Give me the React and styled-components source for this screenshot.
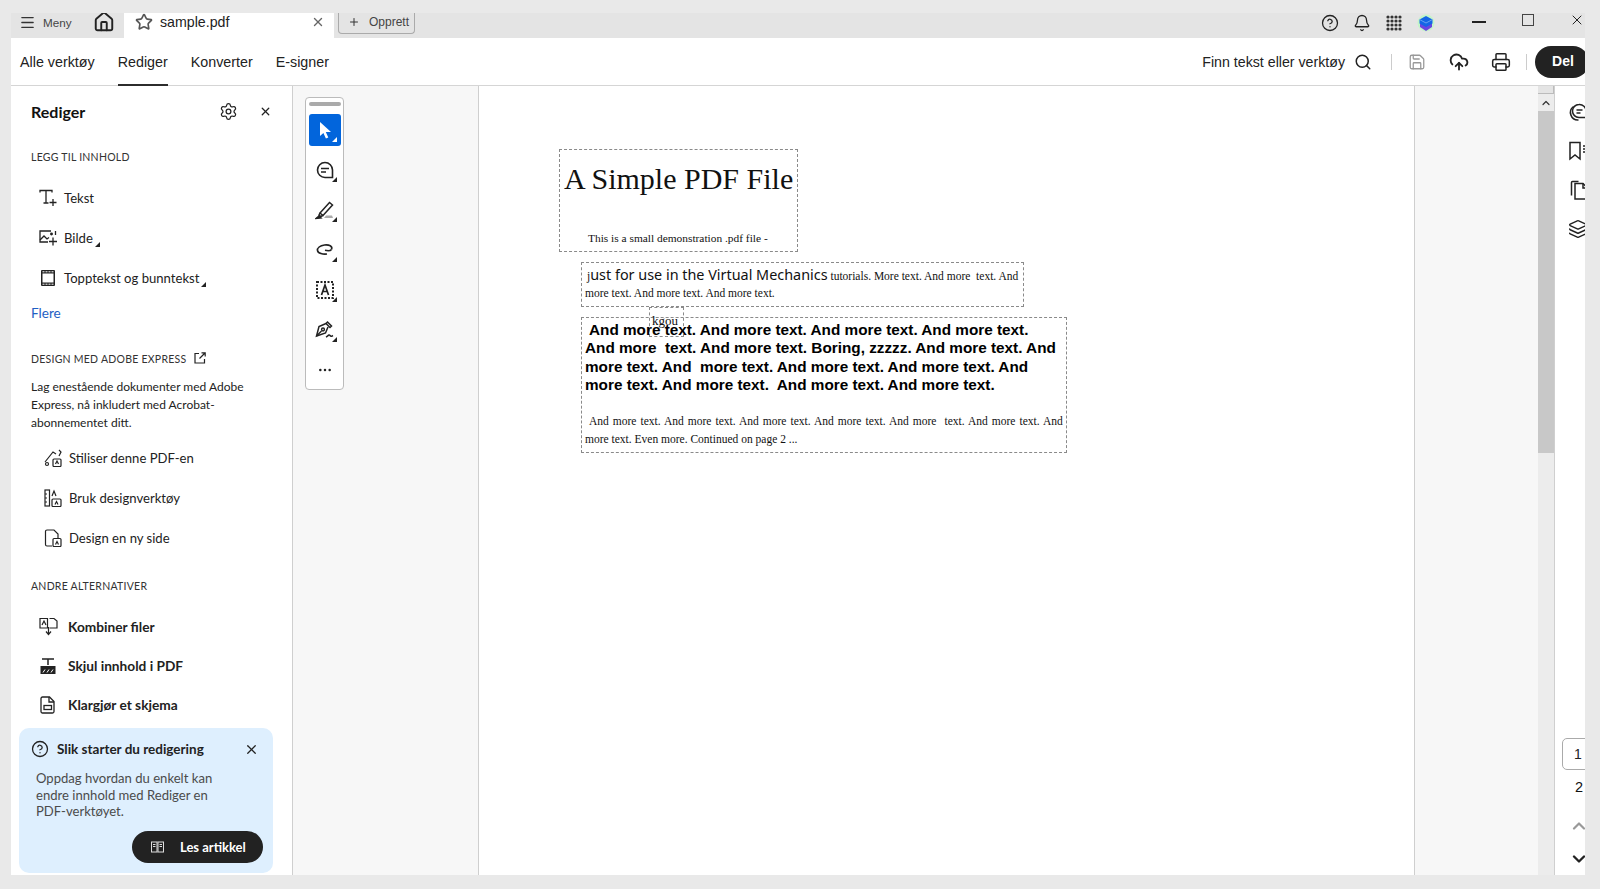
import React from 'react'
import styled, { createGlobalStyle } from 'styled-components'
import {
  Menu, Home, Star, X, Plus, CircleHelp, Bell, Search, Save, CloudUpload, Printer,
  Settings, ChevronUp, ChevronDown, Layers, Ellipsis,
} from 'lucide-react'

const GlobalStyle = createGlobalStyle`
  html, body { margin: 0; padding: 0; background: #e9e9e9; }
  #root { height: 889px; overflow: hidden; }
  * { box-sizing: border-box; }
`

const Shell = styled.div`
  height: 889px;
  padding: 13px 15px 14px 11px;
  color: #222;
  font-family: "Liberation Sans", Arial, sans-serif;
`

const Frame = styled.div`
  height: 100%;
  display: flex;
  flex-direction: column;
  background: #fff;
  overflow: hidden;
`

const TitleBar = styled.div`
  height: 25px;
  flex: none;
  display: flex;
  align-items: flex-start;
  background: #e4e4e4;
`

const MenuButton = styled.div`
  width: 113px;
  height: 25px;
  display: flex;
  align-items: center;
  padding: 0 0 7px 8px;
  font-size: 11.7px;
  color: #444;
  svg { flex: none; }
  span { margin-left: 7px; margin-right: 21px; }
`

const Tab = styled.div`
  width: 210px;
  height: 25px;
  display: flex;
  align-items: center;
  padding: 0 0 7px 11px;
  background: #fff;
  font-size: 14.2px;
  span { margin-left: 7px; flex: 1; }
  svg:last-child { margin-right: 9px; }
`

const CreateButton = styled.div`
  width: 77px;
  height: 21px;
  margin-left: 4px;
  display: flex;
  align-items: center;
  gap: 9px;
  padding: 0 0 2px 9px;
  border: 1px solid #aaa;
  border-top: 0;
  border-radius: 0 0 4px 4px;
  font-size: 12px;
  color: #444;
`

const TitleRight = styled.div`
  margin-left: auto;
  display: flex;
  align-items: center;
  height: 18px;
  margin-top: 1px;
`

const IconSlot = styled.span`
  display: flex;
  margin-left: ${p => p.$left || 0}px;
  margin-right: ${p => p.$gap || 0}px;
  margin-top: ${p => p.$top || 0}px;
`

const WinControl = styled.span`
  display: block;
  flex: none;
  &[data-kind='min'] { width: 14px; height: 2px; background: #222; margin-right: 36px; margin-top: -2px; }
  &[data-kind='max'] { width: 12px; height: 12px; border: 1.5px solid #444; margin-right: 35px; margin-top: -6px; }
`

const MenuBar = styled.div`
  height: 48px;
  flex: none;
  display: flex;
  align-items: stretch;
  padding-left: 9px;
  border-bottom: 1px solid #d5d5d5;
`

const MenuItem = styled.div`
  display: flex;
  align-items: center;
  margin-right: 23px;
  height: 48px;
  padding-top: 2px;
  font-size: 14.3px;
  color: #222;
  border-bottom: 2px solid ${p => (p.$active ? '#2c2c2c' : 'transparent')};
`

const MenuRight = styled.div`
  margin-left: auto;
  display: flex;
  align-items: center;
`

const FindLabel = styled.span`
  font-size: 14.2px;
  margin-right: 9px;
`

const Divider = styled.span`
  width: 1px;
  height: 16px;
  background: #ccc;
  margin: 0 ${p => p.$right}px 0 ${p => p.$left}px;
`

const ShareButton = styled.div`
  width: 54px;
  height: 32px;
  flex: none;
  margin-right: -4px;
  padding-left: 2px;
  padding-bottom: 1px;
  display: flex;
  align-items: center;
  justify-content: center;
  background: #222;
  color: #fff;
  border-radius: 16px;
  font-size: 14px;
  font-weight: 700;
`

const Body = styled.div`
  flex: 1;
  min-height: 0;
  display: flex;
`

const Sidebar = styled.aside`
  width: 282px;
  flex: none;
  display: flex;
  flex-direction: column;
  border-right: 1px solid #cfcfcf;
  padding-left: 20px;
  font-family: Lato, "Noto Sans", sans-serif;
  font-size: 13.1px;
  color: #222;
`

const SideHead = styled.div`
  height: 54px;
  flex: none;
  display: flex;
  align-items: center;
  padding-bottom: 3px;
  h2 { margin: 0; font-size: 16px; font-weight: 700; flex: 1; color: #111; }
  svg:first-of-type { margin-right: 21px; }
  svg:last-of-type { margin-right: 20px; }
`

const SectionLabel = styled.div`
  height: 14px;
  flex: none;
  display: flex;
  align-items: center;
  gap: 8px;
  margin-top: ${p => p.$top || 0}px;
  font-size: 10.5px;
  letter-spacing: 0.25px;
  color: #333;
  text-transform: uppercase;
  white-space: nowrap;
  svg { margin-top: -3px; }
`

const Rows = styled.div`
  flex: none;
  margin-top: ${p => p.$top}px;
`

const ToolRow = styled.div`
  height: ${p => p.$h || 40}px;
  display: flex;
  align-items: center;
  margin-left: ${p => p.$indent || 8}px;
  font-weight: ${p => (p.$bold ? 700 : 400)};
  font-size: ${p => (p.$bold ? 13.7 : 13.1)}px;
  white-space: nowrap;
  svg { flex: none; margin-right: ${p => p.$gap || 7}px; }
`

const MoreLink = styled.div`
  height: 18px;
  margin-top: 6px;
  flex: none;
  display: flex;
  align-items: center;
  color: #1f5fc4;
  font-size: 13.6px;
`

const Blurb = styled.p`
  margin: 12px 0 0;
  flex: none;
  font-size: 12px;
  line-height: 18px;
  color: #222;
  white-space: nowrap;
`

const MiniCaret = styled.span`
  display: inline-block;
  width: 0;
  height: 0;
  margin: 12px 0 0 2px;
  border-style: solid;
  border-width: 0 0 5px 5px;
  border-color: transparent transparent #222 transparent;
`

const Callout = styled.section`
  width: 254px;
  height: 145px;
  flex: none;
  margin: auto 0 2px -12px;
  padding: 12px 10px 10px 12px;
  display: flex;
  flex-direction: column;
  background: #deeffe;
  border-radius: 10px;
`

const CalloutHead = styled.div`
  height: 18px;
  flex: none;
  display: flex;
  align-items: center;
  gap: 8px;
  font-weight: 700;
  font-size: 13.5px;
  span { flex: 1; }
  svg:last-child { margin-right: 4px; }
`

const CalloutText = styled.p`
  margin: 12px 0 0 5px;
  font-size: 13.1px;
  line-height: 16.5px;
  color: #4b4b4b;
  white-space: nowrap;
`

const ReadButton = styled.div`
  width: 131px;
  height: 32px;
  margin-top: auto;
  align-self: flex-end;
  display: flex;
  align-items: center;
  padding-left: 19px;
  gap: 16px;
  background: #222;
  color: #fff;
  border-radius: 16px;
  font-size: 13px;
  font-weight: 700;
`

const Gutter = styled.div`
  width: 186px;
  flex: none;
  padding: 11px 0 0 12px;
  background: #f7f7f7;
  border-right: 1px solid #cfcfcf;
`

const ToolStrip = styled.div`
  width: 39px;
  height: 293px;
  display: flex;
  flex-direction: column;
  align-items: center;
  background: #fff;
  border: 1px solid #bbb;
  border-radius: 4px;
  padding-top: 4px;
`

const StripHandle = styled.div`
  width: 32px;
  height: 4px;
  flex: none;
  background: #aaa;
  border-radius: 2px;
  margin-bottom: 8px;
`

const StripButton = styled.div`
  position: relative;
  width: 32px;
  height: ${p => p.$h || 32}px;
  flex: none;
  margin-bottom: ${p => p.$mb ?? 8}px;
  display: flex;
  align-items: center;
  justify-content: center;
  border-radius: 3px;
  background: ${p => (p.$active ? '#0265dc' : 'transparent')};
  color: ${p => (p.$active ? '#fff' : '#222')};
  &::after {
    content: ${p => (p.$plain ? 'none' : "''")};
    position: absolute;
    right: 4px;
    bottom: 4px;
    border-style: solid;
    border-width: 0 0 5px 5px;
    border-color: transparent transparent ${p => (p.$active ? '#fff' : '#222')} transparent;
  }
`

const Page = styled.main`
  position: relative;
  width: 936px;
  flex: none;
  background: #fff;
  border-right: 1px solid #cfcfcf;
  font-family: "Liberation Serif", "Times New Roman", serif;
`

const TextBox = styled.div`
  position: absolute;
  left: ${p => p.$x}px;
  top: ${p => p.$y}px;
  width: ${p => p.$w}px;
  height: ${p => p.$h}px;
  border: 1px dashed #8a8a8a;
`

const PdfLine = styled.div`
  position: absolute;
  left: ${p => p.$x}px;
  top: ${p => p.$y}px;
  white-space: pre;
  font-size: ${p => p.$size}px;
  line-height: ${p => p.$size + 4}px;
  word-spacing: ${p => p.$ws || 0}px;
  color: #111;
`

const SansBold = styled(PdfLine)`
  font-family: "Liberation Sans", Arial, sans-serif;
  font-weight: 700;
  color: #000;
`

const SansRun = styled.span`
  font-family: "Noto Sans", "Open Sans", sans-serif;
  font-size: 14.4px;
`

const SideSpace = styled.div`
  width: 123px;
  flex: none;
  background: #f7f7f7;
`

const ScrollBar = styled.div`
  width: 16px;
  flex: none;
  display: flex;
  flex-direction: column;
  background: #ececec;
`

const ScrollCap = styled.div`
  height: 8px;
  border: 1px solid #bbb;
  border-top: 0;
  border-left: 0;
  background: #e4e4e4;
`

const ScrollArrow = styled.div`
  height: 17px;
  display: flex;
  align-items: center;
  justify-content: center;
`

const ScrollThumb = styled.div`
  height: 342px;
  background: #c8c8c8;
`

const Rail = styled.div`
  flex: 1;
  min-width: 0;
  overflow: hidden;
  display: flex;
  flex-direction: column;
  border-left: 1px solid #cfcfcf;
  padding-top: 15px;
`

const RailIcon = styled.div`
  width: 22px;
  height: 22px;
  flex: none;
  margin: 0 0 17px 12px;
  display: flex;
  align-items: center;
  justify-content: center;
  svg { flex: none; }
`

const PageBox = styled.div`
  width: 30px;
  height: 32px;
  flex: none;
  margin: auto 0 0 7px;
  padding-left: 11px;
  padding-bottom: 1px;
  display: flex;
  align-items: center;
  border: 1px solid #aaa;
  border-radius: 5px;
  font-size: 14px;
  color: #222;
`

const PageNum = styled.div`
  height: 39px;
  flex: none;
  padding: 0 0 5px 20px;
  display: flex;
  align-items: center;
  font-size: 14.5px;
  color: #111;
`

const PageArrow = styled.div`
  height: 33px;
  flex: none;
  padding-left: 14px;
  display: flex;
  align-items: center;
  svg { flex: none; }
`

const GridIcon = () => (
  <svg width="16" height="16" viewBox="0 0 16 16" fill="#333">
    {[2, 6, 10, 14].map(y => [2, 6, 10, 14].map(x => <circle key={`${x}-${y}`} cx={x} cy={y} r="1.6" />))}
  </svg>
)

const CubeLogo = () => (
  <svg width="18" height="18" viewBox="0 0 18 18">
    <circle cx="9" cy="9" r="8.5" fill="#c5f5c8" />
    <path d="M3 8l6 3.5 6-3.5v5l-6 4-6-4z" fill="#6a45e0" />
    <path d="M2.5 5.5L9 2l6.500 3.500v4L9 13 2.500 9.500z" fill="#1466e6" />
    <path d="M2.500 5.500L9 9l6.500-3.500" stroke="#8db8f5" strokeWidth=".7" fill="none" />
  </svg>
)

const TextPlus = () => (
  <svg width="18" height="18" viewBox="0 0 18 18" fill="none" stroke="#222" strokeWidth="1.300">
    <path d="M1 3.500V1.500h12v2M7 1.500V14M4.500 14h5" />
    <path d="M14 10v7M10.500 13.500h7" />
  </svg>
)

const ImagePlus = () => (
  <svg width="18" height="18" viewBox="0 0 18 18" fill="none" stroke="#222" strokeWidth="1.300">
    <path d="M12 2H1v11h8" />
    <path d="M1 11l4-4 3 3 2-1.500" />
    <circle cx="12.500" cy="5" r=".8" fill="#222" />
    <path d="M14 8.500v8M10 12.500h8M16.500 2v4" />
  </svg>
)

const FilmPage = () => (
  <svg width="18" height="18" viewBox="0 0 18 18">
    <rect x="2" y="1" width="14" height="16" rx="1" fill="#222" />
    <rect x="3.500" y="4.500" width="11" height="9" fill="#fff" />
    <path d="M3.500 2.800h11M3.500 15.200h11" stroke="#fff" strokeWidth="1" strokeDasharray="2 1" />
  </svg>
)

const ExternalBox = () => (
  <svg width="12" height="12" viewBox="0 0 12 12" fill="none" stroke="#222" strokeWidth="1.200">
    <path d="M5 1.500H1v9.500h9.500V7" />
    <path d="M5.500 6.500L11 1M7.500 .8H11.200V4.500" />
  </svg>
)

const StyleBrush = () => (
  <svg width="18" height="18" viewBox="0 0 18 18" fill="none" stroke="#222" strokeWidth="1.200">
    <path d="M1 13l8-10 3 2M15 1l2 2-2 4" />
    <circle cx="3" cy="15" r="1.500" />
    <rect x="9" y="10" width="8" height="7.500" rx="1" />
    <path d="M11.500 15l1.500-3 1.500 3" />
  </svg>
)

const RulerBox = () => (
  <svg width="18" height="18" viewBox="0 0 18 18" fill="none" stroke="#222" strokeWidth="1.200">
    <rect x="1" y="1" width="4.500" height="16" />
    <path d="M1 5h2M1 9h2M1 13h2M8 7l2-5 2 5" />
    <rect x="8" y="10" width="9" height="7.500" rx="1" />
    <path d="M11 15.500l1.500-3 1.500 3" />
  </svg>
)

const PageBox2 = () => (
  <svg width="18" height="18" viewBox="0 0 18 18" fill="none" stroke="#222" strokeWidth="1.200">
    <path d="M8 17H3a1.500 1.500 0 0 1-1.500-1.500v-13A1.500 1.500 0 0 1 3 1h7l4 4v4" />
    <rect x="9" y="9.500" width="8" height="8" rx="1" />
    <path d="M11.500 15.500l1.500-3 1.500 3" />
  </svg>
)

const CombineIcon = () => (
  <svg width="19" height="19" viewBox="0 0 19 19" fill="none" stroke="#222" strokeWidth="1.200">
    <path d="M9 11H1V1.500h7.500V11M10.500 11H18V4l-3-2.500h-4.500" />
    <path d="M3 8l2-4 2 4" />
    <path d="M9.500 10v7M7 14.500l2.500 3 2.500-3" />
  </svg>
)

const RedactIcon = () => (
  <svg width="18" height="18" viewBox="0 0 18 18">
    <path d="M3 2h12M9 2v6" stroke="#222" strokeWidth="1.500" fill="none" />
    <rect x="1.500" y="9" width="15" height="8" fill="#222" />
    <path d="M4 15.500l2-3M8 15.500l2-3M12 15.500l2-3" stroke="#fff" strokeWidth="1" />
  </svg>
)

const FormIcon = () => (
  <svg width="18" height="18" viewBox="0 0 18 18" fill="none" stroke="#222" strokeWidth="1.300">
    <path d="M3.500 1h7l4.500 4.500V15.500a1.500 1.500 0 0 1-1.500 1.500h-10A1.500 1.500 0 0 1 2 15.500v-13A1.500 1.500 0 0 1 3.500 1z" />
    <path d="M10 1v5h5" />
    <rect x="5" y="9.500" width="7.500" height="4" />
  </svg>
)

const BookIcon = () => (
  <svg width="13" height="12" viewBox="0 0 13 12" fill="none" stroke="#ddd" strokeWidth="1">
    <rect x=".5" y="1" width="5.500" height="10" />
    <rect x="7" y="1" width="5.500" height="10" />
    <path d="M2 3.500h2.500M2 5.500h2.500M8.500 3.500H11M8.500 5.500H11" />
  </svg>
)

const ArrowIcon = () => (
  <svg width="14" height="19" viewBox="0 0 14 19" fill="#fff">
    <path d="M2 1l11 10H7.800l2.500 5.500-2.400 1.100-2.500-5.700L2 15z" />
  </svg>
)

const CommentIcon = () => (
  <svg width="20" height="20" viewBox="0 0 20 20" fill="none" stroke="#222" strokeWidth="1.600">
    <path d="M10 2.500a7.500 7.500 0 1 0 0 15h7.500V10A7.500 7.500 0 0 0 10 2.500z" />
    <path d="M6 8.500h8M6 12h5" />
  </svg>
)

const PenIcon = () => (
  <svg width="20" height="20" viewBox="0 0 20 20" fill="none" stroke="#222" strokeWidth="1.500">
    <path d="M5 13L14.500 2.500l3 2.500L8 15.500z" />
    <path d="M5 13l-1 2 1.500 1.500 2.500-1" />
    <path d="M1 18.500l3-2.500 2 2z" fill="#222" />
    <path d="M9 18h9l-1-2.500h-6z" fill="#aaa" stroke="none" />
  </svg>
)

const LassoIcon = () => (
  <svg width="20" height="20" viewBox="0 0 20 20" fill="none" stroke="#222" strokeWidth="1.600">
    <path d="M16.500 9.500C18 6 14 4.500 9.500 5 5 5.500 2 8 2.500 10.500c.5 3 5.500 4 9.500 3.500" />
    <path d="M16.500 9.500c-1 1.300-3.500 1.500-6.500.8" />
  </svg>
)

const TextSelectIcon = () => (
  <svg width="20" height="20" viewBox="0 0 20 20" fill="none">
    <rect x="2" y="2" width="16" height="16" stroke="#222" strokeWidth="2" strokeDasharray="2 1.500" />
    <path d="M6.500 15l3.500-10 3.500 10M7.800 11.500h4.400" stroke="#222" strokeWidth="1.700" />
  </svg>
)

const SignIcon = () => (
  <svg width="20" height="20" viewBox="0 0 20 20" fill="none" stroke="#222" strokeWidth="1.500">
    <path d="M12.500 2l4 4-1.500 1.500-4-4zM11 3.500L4 6.500 1.500 16l9-3 2.500-6" />
    <path d="M1.500 16l5-5" />
    <circle cx="8" cy="9.500" r="1.400" />
    <path d="M11 17c2-1 3-3 4-1.500s2 .5 3 0" />
  </svg>
)

const StackedComment = () => (
  <svg width="20" height="20" viewBox="0 0 20 20" fill="none" stroke="#222" strokeWidth="1.500">
    <path d="M11 2.500a6.500 6.500 0 0 0 0 13h7v-6.500a6.500 6.500 0 0 0-7-6.500z" />
    <path d="M5.500 4.500a7.500 7.500 0 0 0 5 13.500" />
    <path d="M8.500 8h6M8.500 11h4" />
  </svg>
)

const BookmarkList = () => (
  <svg width="20" height="20" viewBox="0 0 20 20" fill="none" stroke="#222" strokeWidth="1.500">
    <path d="M2 1.500h10v16.500l-5-4-5 4z" />
    <path d="M15 5h5M15 8h5M15 11h5" />
  </svg>
)

const PagesIcon = () => (
  <svg width="20" height="20" viewBox="0 0 20 20" fill="none" stroke="#222" strokeWidth="1.500">
    <path d="M7 3.500h8l4 4V19H7z" />
    <path d="M15 3.500V8h4" />
    <path d="M3.500 15.500V2.500a1 1 0 0 1 1-1h6" />
  </svg>
)

function App() {
  return (
    <Shell>
      <GlobalStyle />
      <Frame>
        <TitleBar>
          <MenuButton>
            <Menu size={17} strokeWidth={1.800} color="#333" />
            <span>Meny</span>
            <Home size={22} strokeWidth={2.100} color="#222" />
          </MenuButton>
          <Tab>
            <Star size={18} strokeWidth={2.200} color="#555" />
            <span>sample.pdf</span>
            <X size={14} strokeWidth={2.400} color="#666" />
          </Tab>
          <CreateButton>
            <Plus size={12} strokeWidth={2} color="#333" />
            Opprett
          </CreateButton>
          <TitleRight>
            <IconSlot $gap={14}><CircleHelp size={18} strokeWidth={1.700} color="#222" /></IconSlot>
            <IconSlot $gap={15}><Bell size={18} strokeWidth={1.700} color="#222" /></IconSlot>
            <IconSlot $gap={15}><GridIcon /></IconSlot>
            <IconSlot $gap={37}><CubeLogo /></IconSlot>
            <WinControl data-kind="min" />
            <WinControl data-kind="max" />
            <IconSlot $top={-6}><X size={16} strokeWidth={1.500} color="#222" /></IconSlot>
          </TitleRight>
        </TitleBar>

        <MenuBar>
          <MenuItem>Alle verktøy</MenuItem>
          <MenuItem $active>Rediger</MenuItem>
          <MenuItem>Konverter</MenuItem>
          <MenuItem>E-signer</MenuItem>
          <MenuRight>
            <FindLabel>Finn tekst eller verktøy</FindLabel>
            <Search size={18} strokeWidth={2} color="#222" />
            <Divider $left={19} $right={16} />
            <Save size={18} strokeWidth={1.700} color="#999" />
            <IconSlot $left={23}><CloudUpload size={20} strokeWidth={2.200} color="#222" /></IconSlot>
            <IconSlot $left={22}><Printer size={20} strokeWidth={1.800} color="#222" /></IconSlot>
            <Divider $left={15} $right={8} />
            <ShareButton>Del</ShareButton>
          </MenuRight>
        </MenuBar>

        <Body>
          <Sidebar>
            <SideHead>
              <h2>Rediger</h2>
              <Settings size={19} strokeWidth={1.600} color="#222" />
              <X size={13} strokeWidth={2.400} color="#222" />
            </SideHead>
            <SectionLabel $top={10}>Legg til innhold</SectionLabel>
            <Rows $top={14}>
              <ToolRow><TextPlus />Tekst</ToolRow>
              <ToolRow><ImagePlus />Bilde<MiniCaret /></ToolRow>
              <ToolRow><FilmPage />Topptekst og bunntekst<MiniCaret /></ToolRow>
            </Rows>
            <MoreLink>Flere</MoreLink>
            <SectionLabel $top={30}>Design med Adobe Express <ExternalBox /></SectionLabel>
            <Blurb>
              Lag enestående dokumenter med Adobe<br />
              Express, nå inkludert med Acrobat-<br />
              abonnementet ditt.
            </Blurb>
            <Rows $top={6}>
              <ToolRow $indent={13}><StyleBrush />Stiliser denne PDF-en</ToolRow>
              <ToolRow $indent={13}><RulerBox />Bruk designverktøy</ToolRow>
              <ToolRow $indent={13}><PageBox2 />Design en ny side</ToolRow>
            </Rows>
            <SectionLabel $top={21}>Andre alternativer</SectionLabel>
            <Rows $top={14}>
              <ToolRow $h={39} $bold $gap={10}><CombineIcon />Kombiner filer</ToolRow>
              <ToolRow $h={39} $bold $gap={11}><RedactIcon />Skjul innhold i PDF</ToolRow>
              <ToolRow $h={39} $bold $gap={11}><FormIcon />Klargjør et skjema</ToolRow>
            </Rows>
            <Callout>
              <CalloutHead>
                <CircleHelp size={18} strokeWidth={1.700} color="#222" />
                <span>Slik starter du redigering</span>
                <X size={15} strokeWidth={2} color="#222" />
              </CalloutHead>
              <CalloutText>
                Oppdag hvordan du enkelt kan<br />
                endre innhold med Rediger en<br />
                PDF-verktøyet.
              </CalloutText>
              <ReadButton><BookIcon />Les artikkel</ReadButton>
            </Callout>
          </Sidebar>

          <Gutter>
            <ToolStrip>
              <StripHandle />
              <StripButton $active><ArrowIcon /></StripButton>
              <StripButton><CommentIcon /></StripButton>
              <StripButton><PenIcon /></StripButton>
              <StripButton><LassoIcon /></StripButton>
              <StripButton><TextSelectIcon /></StripButton>
              <StripButton><SignIcon /></StripButton>
              <StripButton $plain $mb={0}><Ellipsis size={16} strokeWidth={1.800} color="#222" /></StripButton>
            </ToolStrip>
          </Gutter>

          <Page>
            <TextBox $x={80} $y={63} $w={239} $h={103} />
            <TextBox $x={102} $y={176} $w={443} $h={45} />
            <TextBox $x={102} $y={231} $w={486} $h={136} />
            <TextBox $x={170} $y={221} $w={35} $h={30} />

            <PdfLine $x={85} $y={76} $size={30}>A Simple PDF File</PdfLine>
            <PdfLine $x={109} $y={145} $size={11.400}>This is a small demonstration .pdf file -</PdfLine>

            <PdfLine $x={108} $y={181} $size={11.500}>
              j<SansRun>ust for use in the Virtual Mechanics</SansRun> tutorials. More text. And more  text. And
            </PdfLine>
            <PdfLine $x={106} $y={200} $size={11.500}>more text. And more text. And more text.</PdfLine>

            <PdfLine $x={173} $y={226} $size={13}>kgou</PdfLine>

            <SansBold $x={110} $y={234} $size={15.300}>And more text. And more text. And more text. And more text.</SansBold>
            <SansBold $x={106} $y={252} $size={15.300}>And more  text. And more text. Boring, zzzzz. And more text. And</SansBold>
            <SansBold $x={106} $y={271} $size={15.300}>more text. And  more text. And more text. And more text. And</SansBold>
            <SansBold $x={106} $y={289} $size={15.300}>more text. And more text.  And more text. And more text.</SansBold>

            <PdfLine $x={110} $y={328} $size={11.500} $ws={1.150}>And more text. And more text. And more text. And more text. And more  text. And more text. And</PdfLine>
            <PdfLine $x={106} $y={346} $size={11.500}>more text. Even more. Continued on page 2 ...</PdfLine>
          </Page>

          <SideSpace />

          <ScrollBar>
            <ScrollCap />
            <ScrollArrow><ChevronUp size={12} strokeWidth={2.400} color="#333" /></ScrollArrow>
            <ScrollThumb />
          </ScrollBar>

          <Rail>
            <RailIcon><StackedComment /></RailIcon>
            <RailIcon><BookmarkList /></RailIcon>
            <RailIcon><PagesIcon /></RailIcon>
            <RailIcon><Layers size={20} strokeWidth={1.700} color="#222" /></RailIcon>
            <PageBox>1</PageBox>
            <PageNum>2</PageNum>
            <PageArrow><ChevronUp size={20} strokeWidth={2.600} color="#999" /></PageArrow>
            <PageArrow><ChevronDown size={20} strokeWidth={2.800} color="#222" /></PageArrow>
          </Rail>
        </Body>
      </Frame>
    </Shell>
  )
}

export default App
